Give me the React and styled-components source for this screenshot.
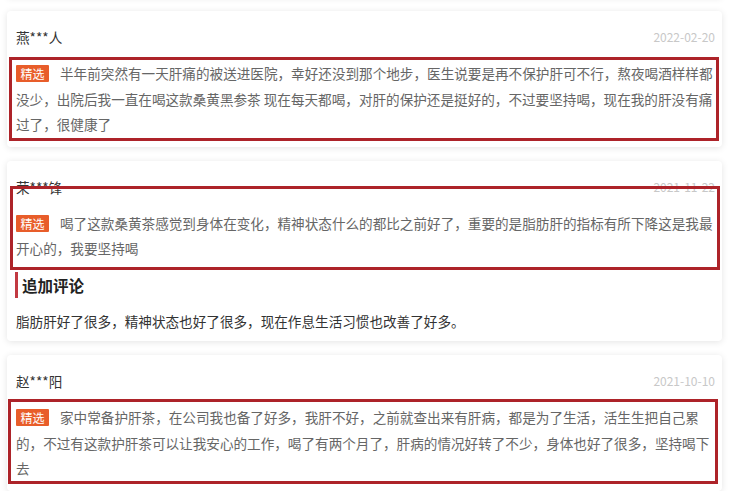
import React from 'react';
import styled, { createGlobalStyle } from 'styled-components';

const GlobalStyle = createGlobalStyle`
  html, body {
    margin: 0;
    padding: 0;
    background: #ffffff;
  }
  body {
    font-family: "Noto Sans CJK SC", "Noto Sans", sans-serif;
    overflow: hidden;
  }
`;

const List = styled.div`
  display: flex;
  flex-direction: column;
  gap: 14px;
  padding: 0 8px 0 7px;
  margin-top: -23px;
`;

const Card = styled.div`
  background: #ffffff;
  border-radius: 4px;
  box-shadow: 0 1px 7px rgba(0, 0, 0, 0.11);
  padding: ${(p) => (p.$stub ? '0' : '16px 7px 9px 9px')};
  height: ${(p) => (p.$stub ? '20px' : 'auto')};
  box-sizing: border-box;
`;

const Header = styled.div`
  display: flex;
  justify-content: space-between;
  align-items: center;
  height: 20px;
  margin-bottom: 14px;
`;

const Name = styled.span`
  font-size: 13.6px;
  line-height: 20px;
  color: #333333;
`;

const DateText = styled.span`
  font-size: 12px;
  line-height: 20px;
  color: #c8c8c8;
`;

const ReviewBlock = styled.div`
  position: relative;
  font-size: 13.6px;
  line-height: 25.5px;
  color: #666666;
`;

const Tag = styled.span`
  display: inline-block;
  vertical-align: top;
  margin-top: 4px;
  margin-right: 11px;
  padding: 0 4.5px;
  height: 17px;
  line-height: 17px;
  font-size: 12px;
  color: #ffffff;
  background: #e85d2a;
  border-radius: 1px;
`;

const Frame = styled.div`
  position: absolute;
  border: 3px solid #ad2329;
  pointer-events: none;
`;

const FollowTitle = styled.div`
  margin-top: 10px;
  margin-left: -1px;
  padding-left: 4px;
  border-left: 3px solid #c23a42;
  height: 26px;
  line-height: 26px;
  font-size: 15.5px;
  font-weight: 700;
  color: #222222;
`;

const FollowText = styled.div`
  margin-top: 11px;
  margin-bottom: -2px;
  font-size: 13.6px;
  line-height: 25.5px;
  color: #333333;
`;

const reviews = [
  {
    name: '燕***人',
    date: '2022-02-20',
    text: '半年前突然有一天肝痛的被送进医院，幸好还没到那个地步，医生说要是再不保护肝可不行，熬夜喝酒样样都没少，出院后我一直在喝这款桑黄黑参茶 现在每天都喝，对肝的保护还是挺好的，不过要坚持喝，现在我的肝没有痛过了，很健康了',
    frame: { top: -4, bottom: -3, left: -7, right: -4 },
  },
  {
    name: '荣***锋',
    date: '2021-11-22',
    text: '喝了这款桑黄茶感觉到身体在变化，精神状态什么的都比之前好了，重要的是脂肪肝的指标有所下降这是我最开心的，我要坚持喝',
    follow: '脂肪肝好了很多，精神状态也好了很多，现在作息生活习惯也改善了好多。',
    frame: { top: -25, bottom: -8, left: -6, right: -5 },
  },
  {
    name: '赵***阳',
    date: '2021-10-10',
    text: '家中常备护肝茶，在公司我也备了好多，我肝不好，之前就查出来有肝病，都是为了生活，活生生把自己累的，不过有这款护肝茶可以让我安心的工作，喝了有两个月了，肝病的情况好转了不少，身体也好了很多，坚持喝下去',
    frame: { top: -6, bottom: -2, left: -8, right: -3 },
  },
];

export default function App() {
  return (
    <>
      <GlobalStyle />
      <List>
        <Card $stub />
        {reviews.map((r) => (
          <Card key={r.name}>
            <Header>
              <Name>{r.name}</Name>
              <DateText>{r.date}</DateText>
            </Header>
            <ReviewBlock>
              <Tag>精选</Tag>
              {r.text}
              <Frame style={r.frame} />
            </ReviewBlock>
            {r.follow && (
              <>
                <FollowTitle>追加评论</FollowTitle>
                <FollowText>{r.follow}</FollowText>
              </>
            )}
          </Card>
        ))}
      </List>
    </>
  );
}
